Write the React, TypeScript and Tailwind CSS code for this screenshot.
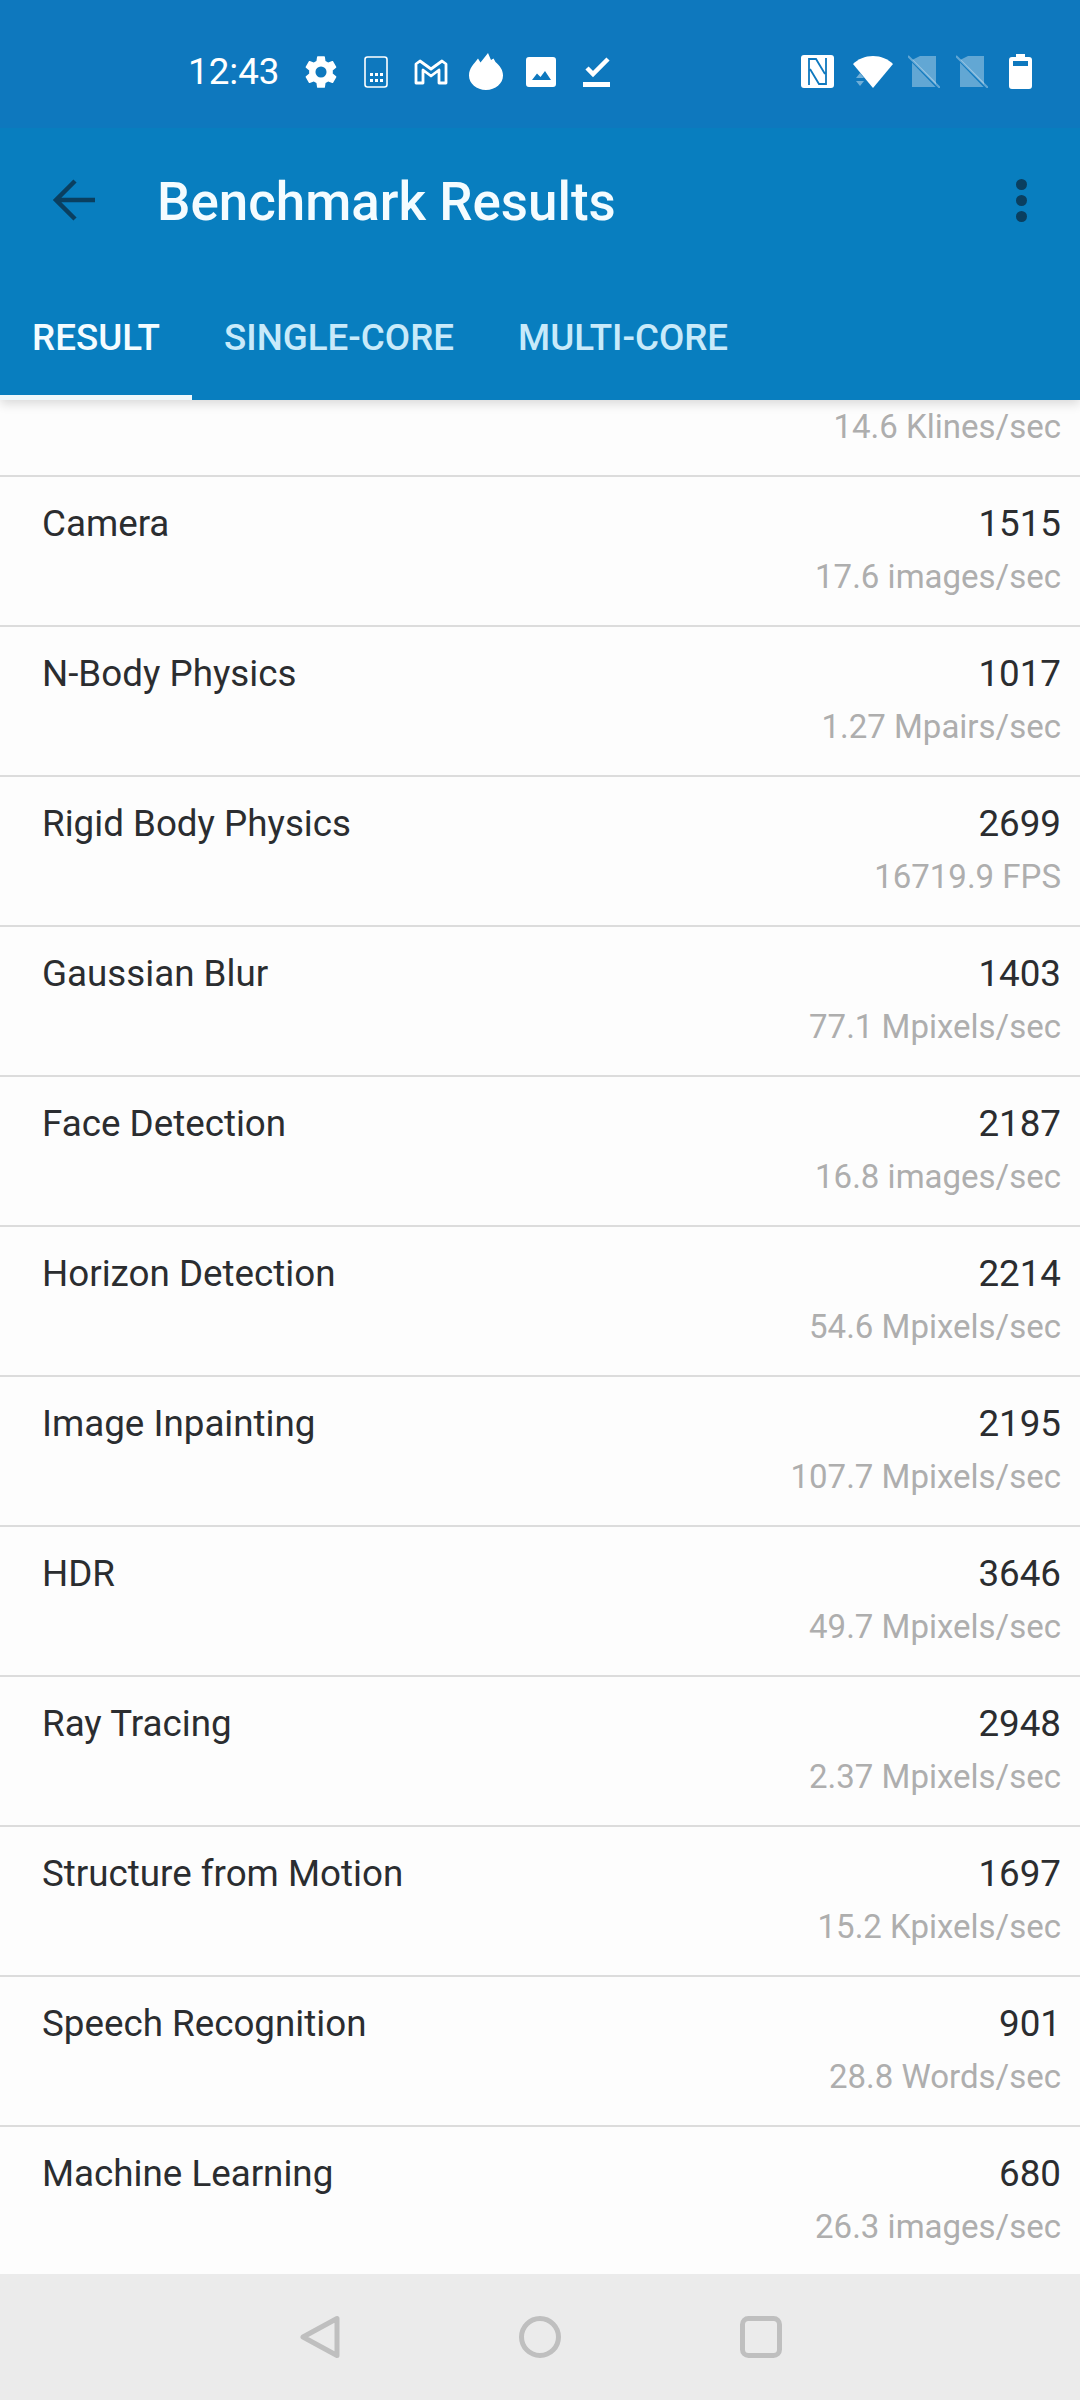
import React from 'react';

const rows = [
  { name: 'Camera', score: '1515', rate: '17.6 images/sec' },
  { name: 'N-Body Physics', score: '1017', rate: '1.27 Mpairs/sec' },
  { name: 'Rigid Body Physics', score: '2699', rate: '16719.9 FPS' },
  { name: 'Gaussian Blur', score: '1403', rate: '77.1 Mpixels/sec' },
  { name: 'Face Detection', score: '2187', rate: '16.8 images/sec' },
  { name: 'Horizon Detection', score: '2214', rate: '54.6 Mpixels/sec' },
  { name: 'Image Inpainting', score: '2195', rate: '107.7 Mpixels/sec' },
  { name: 'HDR', score: '3646', rate: '49.7 Mpixels/sec' },
  { name: 'Ray Tracing', score: '2948', rate: '2.37 Mpixels/sec' },
  { name: 'Structure from Motion', score: '1697', rate: '15.2 Kpixels/sec' },
  { name: 'Speech Recognition', score: '901', rate: '28.8 Words/sec' },
  { name: 'Machine Learning', score: '680', rate: '26.3 images/sec' },
];

const StatusIcons = () => (
  <div className="flex items-center">
    <svg width="38" height="38" viewBox="0 0 24 24" className="ml-[22px]" fill="white">
      <path d="M19.4 13c.04-.32.07-.66.07-1s-.03-.68-.07-1l2.1-1.65c.2-.15.25-.42.12-.64l-2-3.46c-.12-.22-.39-.3-.61-.22l-2.49 1c-.52-.4-1.08-.73-1.69-.98l-.38-2.65A.49.49 0 0 0 14 2h-4c-.25 0-.46.18-.49.42l-.38 2.65c-.61.25-1.17.59-1.69.98l-2.49-1c-.23-.09-.49 0-.61.22l-2 3.46c-.13.22-.07.49.12.64L4.57 11c-.04.32-.07.66-.07 1s.03.68.07 1l-2.11 1.65c-.19.15-.25.42-.12.64l2 3.46c.12.22.39.3.61.22l2.49-1c.52.4 1.08.73 1.69.98l.38 2.65c.03.24.24.42.49.42h4c.25 0 .46-.18.49-.42l.38-2.65c.61-.25 1.17-.59 1.69-.98l2.49 1c.23.09.49 0 .61-.22l2-3.46c.12-.22.07-.49-.12-.64L19.4 13zM12 15.5a3.5 3.5 0 1 1 0-7 3.5 3.5 0 0 1 0 7z" />
    </svg>
    <svg width="24" height="32" viewBox="0 0 24 32" className="ml-[24px]" fill="none">
      <rect x="1" y="1" width="22" height="30" rx="2.500" stroke="white" strokeWidth="1.600" />
      <g fill="white">
        <rect x="6" y="17" width="3" height="3" /><rect x="11" y="17" width="3" height="3" /><rect x="16" y="17" width="3" height="3" />
        <rect x="6" y="23" width="3" height="3" /><rect x="11" y="23" width="3" height="3" /><rect x="16" y="23" width="3" height="3" />
      </g>
    </svg>
    <svg width="34" height="26" viewBox="0 0 34 26" className="ml-[26px]" fill="none">
      <path d="M2 24V5l4-3 11 8 11-8 4 3v19h-7V11l-8 6-8-6v13z" stroke="white" strokeWidth="2.800" strokeLinejoin="round" />
    </svg>
    <svg width="34" height="38" viewBox="0 0 34 38" className="ml-[21px]" fill="white">
      <path d="M17 37C7.500 37 0 30.500 0 22.500 0 15 5 11 9 5.500l2.500 4L19 0l3 7 2.500-1.500 2 3.500C31 13 34 17 34 22.500 34 30.500 26.500 37 17 37z" />
    </svg>
    <svg width="30" height="30" viewBox="0 0 30 30" className="ml-[23px]">
      <path fillRule="evenodd" fill="white" d="M3 0h24a3 3 0 0 1 3 3v24a3 3 0 0 1-3 3H3a3 3 0 0 1-3-3V3a3 3 0 0 1 3-3zm3 23h19l-6-9-4.500 6-3.500-3.500z" />
    </svg>
    <svg width="28" height="32" viewBox="0 0 28 32" className="ml-[27px]" fill="none">
      <path d="M4 12l6 6L25 3" stroke="white" strokeWidth="4.500" />
      <rect x="0" y="26" width="27" height="5" fill="white" />
    </svg>
  </div>
);

const SimOff = ({ className }: { className: string }) => (
  <svg width="32" height="33" viewBox="0 0 32 33" className={className}>
    <path fill="white" fillOpacity="0.35" d="M4 5v27h24V1H12z" />
    <path stroke="#0e78be" strokeWidth="2" d="M0 2l30 31" />
    <path stroke="white" strokeOpacity="0.35" strokeWidth="2" d="M0 1l32 32" />
  </svg>
);

const SystemIcons = () => (
  <div className="flex items-center">
    <svg width="33" height="33" viewBox="0 0 33 33">
      <rect width="33" height="33" rx="3" fill="white" />
      <path d="M8 30V4h7l9 15M25 3v26h-7L9 14" fill="none" stroke="#0e78be" strokeWidth="1.800" />
    </svg>
    <svg width="40" height="32" viewBox="0 0 40 32" className="ml-[19px]">
      <path fill="white" d="M0 8C5 3 12 0 20 0s15 3 20 8L20 32z" />
      <path fill="white" fillOpacity="0.4" d="M3 22l4-5 4 5zM3 25l4 5 4-5z" />
    </svg>
    <SimOff className="ml-[15px]" />
    <SimOff className="ml-[16px]" />
    <svg width="23" height="35" viewBox="0 0 23 35" className="ml-[21px]">
      <path fillRule="evenodd" fill="white" d="M7 0h9v3h4a3 3 0 0 1 3 3v26a3 3 0 0 1-3 3H3a3 3 0 0 1-3-3V6a3 3 0 0 1 3-3h4zM4 7v5h15V7z" />
    </svg>
  </div>
);

const App = () => {
  return (
    <div className="w-[1080px] h-[2400px] flex flex-col overflow-hidden bg-[#fdfdfd] font-['Roboto',sans-serif]">
      {/* header */}
      <div className="relative z-10 bg-[#087ebf] shadow-[0_4px_10px_rgba(0,0,0,0.14)]">
        <div className="h-[128px] bg-[#0e78be] flex items-start justify-between pl-[188px] pr-[48px] pt-[54px]">
          <div className="flex items-center h-[36px]">
            <span className="text-white text-[36.75px] leading-none">12:43</span>
            <StatusIcons />
          </div>
          <SystemIcons />
        </div>
        <div className="h-[148px] flex items-center pl-[52px] pr-[53px] pb-[4px]">
          <svg width="44" height="44" viewBox="0 0 44 44" fill="none" className="shrink-0">
            <path d="M43 22H5M23 3L4 22l19 19" stroke="#0a3f60" strokeWidth="4.500" />
          </svg>
          <span className="ml-[61px] pt-[5px] text-[#f4fcff] text-[52.9px] font-medium leading-none">Benchmark Results</span>
          <div className="ml-auto flex flex-col gap-[5px]">
            <div className="w-[11px] h-[11px] rounded-full bg-[#0a3f60]" />
            <div className="w-[11px] h-[11px] rounded-full bg-[#0a3f60]" />
            <div className="w-[11px] h-[11px] rounded-full bg-[#0a3f60]" />
          </div>
        </div>
        <div className="h-[124px] flex text-[36.75px] font-medium">
          <div className="relative w-[192px] flex items-center justify-center text-[#f4fcff]">
            RESULT
            <div className="absolute left-0 right-0 bottom-0 h-[5px] bg-[#eef8fc]" />
          </div>
          <div className="px-[32px] flex items-center text-[#c8eafa]">SINGLE-CORE</div>
          <div className="px-[32px] flex items-center text-[#c8eafa]">MULTI-CORE</div>
        </div>
      </div>

      {/* results list */}
      <div className="flex-1 overflow-hidden">
        <div className="h-[77px] border-b-[2px] border-[#dcdcdc] flex justify-end items-start pr-[19px]">
          <span className="mt-[7px] text-[33px] leading-[40px] text-[#aeaeae]">14.6 Klines/sec</span>
        </div>
        {rows.map(row => (
          <div key={row.name} className="h-[150px] border-b-[2px] border-[#dcdcdc] last:border-b-0 pl-[42px] pr-[19px] pt-[25px] flex justify-between">
            <span className="text-[36.75px] leading-[44px] text-[#2b2d30]">{row.name}</span>
            <div className="flex flex-col items-end">
              <span className="text-[36.75px] leading-[44px] text-[#2b2d30]">{row.score}</span>
              <span className="mt-[11px] text-[33px] leading-[40px] text-[#aeaeae]">{row.rate}</span>
            </div>
          </div>
        ))}
      </div>

      {/* nav bar */}
      <div className="h-[126px] bg-[#ebebeb] flex items-center justify-center gap-[179px] pl-[1px]">
        <svg width="41" height="44" viewBox="0 0 41 44" fill="none">
          <path d="M38 3.500v37L4 22z" stroke="#bfbfbf" strokeWidth="5" strokeLinejoin="round" />
        </svg>
        <svg width="42" height="42" viewBox="0 0 42 42" fill="none">
          <circle cx="21" cy="21" r="18.500" stroke="#bfbfbf" strokeWidth="5" />
        </svg>
        <svg width="42" height="42" viewBox="0 0 42 42" fill="none">
          <rect x="2.500" y="2.500" width="37" height="37" rx="6" stroke="#bfbfbf" strokeWidth="5" />
        </svg>
      </div>
    </div>
  );
};

export default App;
